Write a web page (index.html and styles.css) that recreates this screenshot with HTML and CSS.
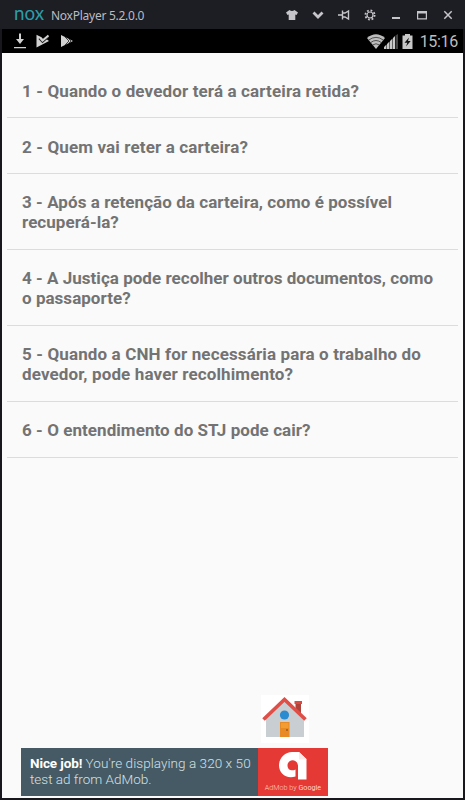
FILE: index.html
```html
<!DOCTYPE html>
<html lang="pt-BR">

<head>
    <meta charset="utf-8">
    <meta name="viewport" content="width=device-width, initial-scale=1.0">
    <title>NoxPlayer 5.2.0.0</title>
    <link rel="stylesheet" href="styles.css">
</head>

<body>
    <header class="titlebar">
        <svg class="nox" width="31" height="22" viewBox="0 0 31 22">
            <text x="0" y="16" textLength="30" lengthAdjust="spacingAndGlyphs">nox</text>
        </svg>
        <h1>NoxPlayer 5.2.0.0</h1>
        <nav class="window-buttons">
            <svg width="12" height="12" viewBox="0 0 12 12"><path d="M3.500 1 Q6 3 8.500 1 L12 3.500 10.500 6 9.300 5.500V11H2.700V5.500L1.500 6 0 3.500Z" fill="#c6c6ca"/></svg>
            <svg width="12" height="12" viewBox="0 0 12 12"><path d="M1.500 3.500 6 8 10.500 3.500" fill="none" stroke="#c6c6ca" stroke-width="2.800"/></svg>
            <svg width="12" height="12" viewBox="0 0 12 12"><path d="M0 6H4M4.500 1.500V10.500M4.500 4H7L10.500 2V10L7 8H4.500" fill="none" stroke="#c6c6ca" stroke-width="1.400"/></svg>
            <svg width="12" height="12" viewBox="0 0 12 12" fill="none" stroke="#c6c6ca"><circle cx="6" cy="6" r="4.600" stroke-width="1.800" stroke-dasharray="1.800 1.810"/><circle cx="6" cy="6" r="3" stroke-width="1.200"/></svg>
            <svg width="12" height="12" viewBox="0 0 12 12"><path d="M2 8H10V10H2Z" fill="#c6c6ca"/></svg>
            <svg width="12" height="12" viewBox="0 0 12 12"><path d="M1 2H11V10.500H1ZM2.200 4.500V9.300H9.800V4.500Z" fill="#c6c6ca" fill-rule="evenodd"/></svg>
            <svg width="12" height="12" viewBox="0 0 12 12"><path d="M2.300 2.300 9.700 9.700M9.700 2.300 2.300 9.700" stroke="#c6c6ca" stroke-width="1.500"/></svg>
        </nav>
    </header>

    <div class="screen">
        <div class="statusbar">
            <div class="notifications">
                <svg width="12" height="16" viewBox="0 0 12 16" fill="#d2d2d2"><path d="M5 .5H7V6H10L6 11 2 6H5ZM0 14H12V15.200H0Z"/></svg>
                <svg width="14" height="14" viewBox="0 0 14 14"><path d="M.5 .8 5 3 7 5 11 5.500 13 7 .5 13.500Z" fill="#d2d2d2"/><path d="M3 4.500 6.500 8.300 12.500 3" fill="none" stroke="#222" stroke-width="1.500"/><path d="M4 3.500 6.500 6.500 12.500 1.500" fill="none" stroke="#d2d2d2" stroke-width="2"/></svg>
                <svg width="14" height="14" viewBox="0 0 14 14"><path d="M1 1 13 7 1 13Z" fill="#d2d2d2"/><path d="M5 3 9 7 5 11M8.500 4.500 11 7 8.500 9.500" fill="none" stroke="#333" stroke-width=".9"/></svg>
            </div>
            <div class="system">
                <svg class="wifi" width="18" height="15" viewBox="0 0 18 15"><path d="M0 4Q9-3.500 18 4L9 15Z" fill="#bdbdbd"/><path d="M1.500 6.200Q9 .5 16.500 6.200M3.500 8.700Q9 4.300 14.500 8.700M5.500 11Q9 8.500 12.500 11" fill="none" stroke="#333" stroke-width=".8"/></svg>
                <svg width="14" height="15" viewBox="0 0 14 15"><path d="M0 15V13L2.500 10.500V15ZM3 15V10L5.500 7.500V15ZM6 15V7L8.500 4.500V15ZM9 15V4L11 2V15Z" fill="#c8c8c8"/><path d="M11.500 15V1.500L14 0V15Z" fill="#444"/></svg>
                <svg class="battery" width="11" height="15" viewBox="0 0 11 15"><path d="M3 0H8V1.500H10.500V15H.5V1.500H3Z" fill="#c8c8c8"/><path d="M7 3.500 2.500 8.700H5.300L4 12.500 8.700 7H6Z" fill="#111"/></svg>
                <span class="clock">15:16</span>
            </div>
        </div>

        <main>
            <ul class="questions">
                <li>1 - Quando o devedor terá a carteira retida?</li>
                <li>2 - Quem vai reter a carteira?</li>
                <li>3 - Após a retenção da carteira, como é possível<br>recuperá-la?</li>
                <li>4 - A Justiça pode recolher outros documentos, como<br>o passaporte?</li>
                <li>5 - Quando a CNH for necessária para o trabalho do<br>devedor, pode haver recolhimento?</li>
                <li>6 - O entendimento do STJ pode cair?</li>
            </ul>

            <button class="home" aria-label="Home">
                <svg width="48" height="48" viewBox="0 0 48 48">
                    <path d="M34.500 7H40V22H34.500Z" fill="#ad433b"/>
                    <path d="M33.500 6H41V9H33.500Z" fill="#dc4b42"/>
                    <path d="M5 24 24 6 43 24V42H5Z" fill="#c9ced2"/>
                    <path d="M2.500 24.500 23.500 4.500 44.500 24.500" fill="none" stroke="#df4e47" stroke-width="3.600"/>
                    <circle cx="23.500" cy="20" r="4.600" fill="#2b8bd1"/>
                    <path d="M19 27H28.500V42H19Z" fill="#e88b24"/>
                    <path d="M20 28H27.500V33H20Z" fill="#f29c34"/>
                    <circle cx="26" cy="35" r="1" fill="#9d5a18"/>
                </svg>
            </button>

            <aside class="ad">
                <p><b>Nice job!</b> <span class="ad-first">You're displaying a 320 x 50</span><br><span>test ad from AdMob.</span></p>
                <div class="admob">
                    <svg width="30" height="30" viewBox="0 0 30 30"><path d="M17.500 25.500C8 28.500 1 22 1 14.500 1 7 7 1 14 1H21L28.500 8V28.500H20V14.500C19 7 9.500 8 9.500 14.500 9.500 19 14 20.500 17.500 18.500Z" fill="#fff"/><path d="M21 1V8.500H28.500Z" fill="#fbe9e8"/></svg>
                    <span>AdMob by <b>Google</b></span>
                </div>
            </aside>
        </main>
    </div>
</body>

</html>
```
FILE: styles.css
```css
* {
    box-sizing: border-box;
}

body {
    margin: 0;
    height: 800px;
    overflow: hidden;
    background-color: #17171d;
    font-family: Roboto, sans-serif;
}

/************ Title bar ************/

.titlebar {
    display: flex;
    align-items: center;
    height: 29px;
    padding: 0 11px 0 14px;
    background-color: #1d1d24;
}

.nox {
    overflow: visible;
    font-family: Lato, sans-serif;
    font-size: 20px;
    font-weight: 400;
    fill: #2c9cab;
}

.titlebar h1 {
    margin: 1px 0 0 6px;
    font-family: "Noto Sans", sans-serif;
    font-size: 12px;
    font-weight: 400;
    letter-spacing: -0.26px;
    color: #bcbcc0;
    white-space: nowrap;
}

.window-buttons {
    display: flex;
    gap: 14px;
    margin-left: auto;
}

/************ Status bar ************/

.screen {
    height: 771px;
    padding: 0 2px 2px;
}

.statusbar {
    display: flex;
    justify-content: space-between;
    align-items: center;
    height: 24px;
    padding: 0 5px 0 12px;
    background-color: #000;
}

.notifications,
.system {
    display: flex;
    align-items: center;
}

.notifications {
    gap: 10px;
}

.wifi {
    margin-right: -1px;
}

.battery {
    margin-left: 4px;
}

.clock {
    margin-left: 7px;
    padding-top: 1px;
    font-size: 16px;
    line-height: 23px;
    letter-spacing: -0.3px;
    color: #bdbdbd;
}

/************ Questions ************/

main {
    display: flex;
    flex-direction: column;
    height: 745px;
    padding: 9px 5px 2px;
    background-color: #fafafa;
}

.questions {
    margin: 0;
    padding: 0;
    list-style: none;
}

.questions li {
    padding: 18px 15px 17px;
    border-bottom: 1px solid #dcdcdc;
    font-size: 17px;
    font-weight: 700;
    line-height: 20px;
    letter-spacing: 0.06px;
    color: #737373;
    white-space: nowrap;
}

.questions li:nth-child(-n+2) {
    padding: 19px 15px 16px;
    letter-spacing: 0.13px;
}

.questions li:nth-child(4) {
    letter-spacing: 0.03px;
}

.questions li:nth-child(5) {
    letter-spacing: 0.13px;
}

/************ Home and ad ************/

.home {
    width: 48px;
    height: 48px;
    margin: auto 0 5px 254px;
    padding: 0;
    border: 0;
    background-color: #fff;
}

.home svg {
    display: block;
}

.ad {
    display: flex;
    width: 307px;
    height: 48px;
    margin-left: 14px;
    background-color: #455a64;
}

.ad p {
    flex: 1;
    margin: 0;
    padding: 7px 0 0 9px;
    font-size: 13.5px;
    font-weight: 300;
    line-height: 16px;
    color: #d7e0e4;
    white-space: nowrap;
}

.ad p b {
    font-weight: 700;
    letter-spacing: -0.1px;
    color: #fff;
}

.ad-first {
    letter-spacing: 0.06px;
}

.admob {
    display: flex;
    flex-direction: column;
    align-items: center;
    width: 70px;
    padding-top: 3px;
    background-color: #e53935;
}

.admob span {
    font-size: 7.2px;
    font-weight: 300;
    line-height: 13px;
    color: #ffd5d2;
    white-space: nowrap;
}

.admob b {
    font-weight: 400;
}
```
